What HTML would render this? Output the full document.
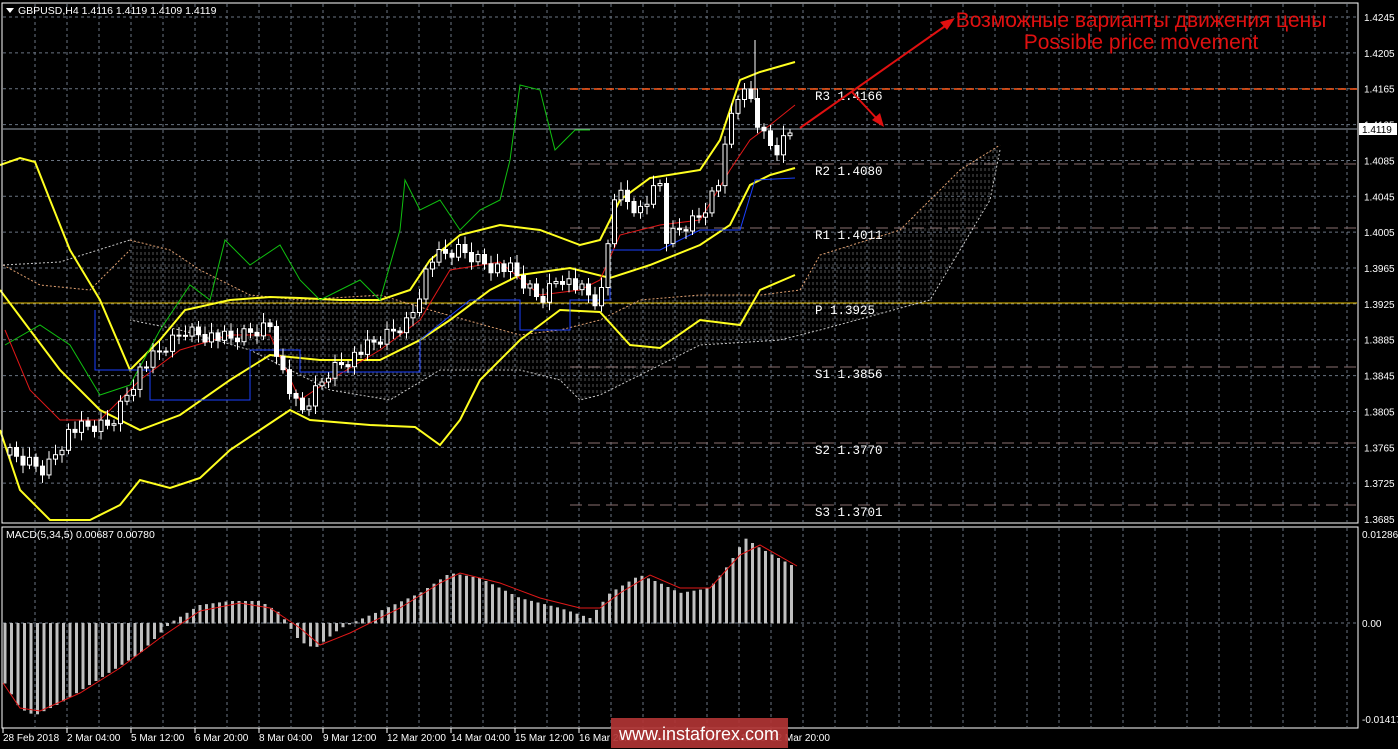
<!DOCTYPE html><html><head><meta charset="utf-8"><style>
html,body{margin:0;padding:0;background:#000;width:1398px;height:749px;overflow:hidden;font-family:"Liberation Sans",sans-serif}
svg{position:absolute;left:0;top:0}
</style></head><body>
<svg id="s" width="1398" height="749" xmlns="http://www.w3.org/2000/svg" font-family="Liberation Sans, sans-serif">
<defs>
<pattern id="hatch" width="4" height="6" patternUnits="userSpaceOnUse"><line x1="1" y1="0" x2="1" y2="3" stroke="#d8d8d8" stroke-width="0.7"/></pattern>
</defs>
<g id="grid"></g>
<g id="cloud"></g>
<g id="lines"></g>
<g id="cand"></g>
<g id="macd"></g>
<rect x="2" y="3" width="1356" height="520" fill="none" stroke="#fff" stroke-width="1"/>
<rect x="2" y="527" width="1356" height="201" fill="none" stroke="#fff" stroke-width="1"/>
<polygon points="6,8 14,8 10,13" fill="#fff"/>
<text x="18" y="14" fill="#fff" font-size="10.5">GBPUSD,H4  1.4116 1.4119 1.4109 1.4119</text>
<text x="6" y="538" fill="#fff" font-size="10.5">MACD(5,34,5) 0.00687 0.00780</text>
<g id="labels" fill="#fff" font-size="10"></g>
<line x1="800" y1="128" x2="948" y2="24" stroke="#e01010" stroke-width="2"/>
<polygon points="955,18 940,22 947,30" fill="#e01010"/>
<line x1="852" y1="92" x2="878" y2="120" stroke="#e01010" stroke-width="2"/>
<polygon points="884,127 872,120 880,113" fill="#e01010"/>
<text x="1141" y="27" fill="#e01010" font-size="21" text-anchor="middle">Возможные варианты движения цены</text>
<text x="1141" y="49" fill="#e01010" font-size="21" text-anchor="middle">Possible price movement</text>
<rect x="611" y="718" width="177" height="30" fill="#b03434" opacity="0.92"/>
<text x="699" y="740" fill="#fff" font-size="18" text-anchor="middle">www.instaforex.com</text>
</svg>
<script>
(function(){
var NS="http://www.w3.org/2000/svg";
function el(p,t,a){var e=document.createElementNS(NS,t);for(var k in a)e.setAttribute(k,a[k]);document.getElementById(p).appendChild(e);return e;}
function interp(pts,x){if(x<=pts[0][0])return pts[0][1];for(var i=0;i<pts.length-1;i++){if(x>=pts[i][0]&&x<=pts[i+1][0]){var t=(x-pts[i][0])/(pts[i+1][0]-pts[i][0]);return pts[i][1]+t*(pts[i+1][1]-pts[i][1]);}}return pts[pts.length-1][1];}
function pl(p,pts,c,w,d){el(p,"polyline",{points:pts.map(function(q){return q.join(",")}).join(" "),fill:"none",stroke:c,"stroke-width":w,"stroke-dasharray":d||"none"});}
for(var x=35;x<1358;x+=32){el("grid","line",{x1:x,y1:4,x2:x,y2:522,stroke:"#6a7482","stroke-dasharray":"3,3"});el("grid","line",{x1:x,y1:528,x2:x,y2:727,stroke:"#6a7482","stroke-dasharray":"3,3"});}
var prices=["1.4245","1.4205","1.4165","1.4125","1.4085","1.4045","1.4005","1.3965","1.3925","1.3885","1.3845","1.3805","1.3765","1.3725","1.3685"];
for(var i=0;i<15;i++){var y=17+i*35.86;if(i<14)el("grid","line",{x1:3,y1:y,x2:1357,y2:y,stroke:"#6a7482","stroke-dasharray":"3,3"});el("labels","text",{x:1364,y:y+4}).textContent=prices[i];}
el("grid","line",{x1:3,y1:623,x2:1357,y2:623,stroke:"#6a7482","stroke-dasharray":"3,3"});
el("labels","text",{x:1362,y:538}).textContent="0.01286";
el("labels","text",{x:1362,y:627}).textContent="0.00";
el("labels","text",{x:1362,y:723}).textContent="-0.01417";
var pv=[[89,"R3 1.4166","#ff5a1a"],[164,"R2 1.4080","#8a7070"],[228,"R1 1.4011","#8a7070"],[303,"P 1.3925","#e8c000"],[367,"S1 1.3856","#8a7070"],[443,"S2 1.3770","#8a7070"],[505,"S3 1.3701","#8a7070"]];
pv.forEach(function(p){if(p[1][0]=="P")el("grid","line",{x1:3,y1:p[0],x2:1357,y2:p[0],stroke:p[2]});else el("grid","line",{x1:570,y1:p[0],x2:1357,y2:p[0],stroke:p[2],"stroke-dasharray":p[0]==89?"8,4":"12,6","stroke-width":p[0]==89?1.5:1});
var t=el("labels","text",{x:815,y:p[0]+11,"font-family":"Liberation Mono, monospace","font-size":"12.5"});t.textContent=p[1];});
el("grid","line",{x1:3,y1:129,x2:1357,y2:129,stroke:"#9aa4b0"});
el("labels","rect",{x:1359,y:123,width:38,height:12,fill:"#fff"});
el("labels","text",{x:1362,y:133,fill:"#000"}).textContent="1.4119";
var tl=["28 Feb 2018","2 Mar 04:00","5 Mar 12:00","6 Mar 20:00","8 Mar 04:00","9 Mar 12:00","12 Mar 20:00","14 Mar 04:00","15 Mar 12:00","16 Mar 20:00","20 Mar 04:00","21 Mar 12:00","22 Mar 20:00"];
for(var i=0;i<tl.length;i++){var xx=3+i*64;el("labels","text",{x:xx,y:741}).textContent=tl[i];el("grid","line",{x1:xx,y1:728,x2:xx,y2:733,stroke:"#fff"});}
var ct=[[130,240],[170,250],[200,270],[250,295],[300,300],[380,295],[430,310],[520,335],[560,330],[600,320],[640,300],[700,295],[760,295],[800,290],[820,255],[900,230],[930,200],[960,170],[1000,145]];
var cb=[[1000,150],[990,200],[930,300],[820,330],[780,340],[700,345],[660,365],[600,395],[580,400],[560,380],[520,370],[440,370],[390,400],[330,390],[250,350],[180,330],[130,320]];
el("cloud","polygon",{points:ct.concat(cb).map(function(q){return q.join(",")}).join(" "),fill:"url(#hatch)",opacity:0.55});
pl("cloud",ct,"#e0a070",1,"2,2");pl("cloud",cb,"#c8c8c8",1,"2,2");
pl("cloud",[[3,265],[40,285],[90,290],[130,250]],"#e0a070",1,"2,2");
pl("cloud",[[3,265],[60,262],[130,240]],"#c8c8c8",1,"2,2");
pl("lines",[[0,165],[20,158],[35,162],[50,200],[70,250],[100,300],[130,370],[160,340],[185,310],[230,300],[270,297],[300,298],[340,300],[380,300],[410,290],[430,260],[460,235],[500,225],[540,230],[580,245],[600,240],[620,200],[650,178],[700,170],[720,140],[740,80],[760,72],[795,62]],"#ffff20",2);
pl("lines",[[0,290],[30,330],[60,370],[100,410],[140,430],[180,415],[230,380],[270,355],[320,360],[380,360],[420,340],[450,320],[490,290],[520,275],[570,268],[610,278],[650,265],[700,245],[730,225],[750,185],[770,175],[795,168]],"#ffff20",2);
pl("lines",[[0,430],[20,490],[50,520],[90,520],[120,505],[140,480],[170,488],[200,478],[230,450],[260,430],[290,410],[310,420],[370,425],[415,427],[440,445],[460,420],[480,380],[520,340],[560,310],[600,312],[630,345],[660,348],[700,320],[740,325],[760,290],[795,275]],"#ffff20",2);
pl("lines",[[5,345],[40,325],[70,345],[100,395],[130,385],[160,330],[190,285],[210,300],[225,240],[250,265],[280,245],[300,280],[320,300],[340,290],[360,280],[380,300],[400,230],[405,180],[420,210],[440,200],[460,230],[480,210],[500,200],[510,160],[520,85],[540,90],[555,150],[575,130],[590,130]],"#10c010",1);
pl("lines",[[5,330],[30,390],[60,420],[100,420],[140,380],[180,350],[230,335],[270,335],[300,400],[330,380],[380,350],[420,320],[450,270],[500,262],[540,295],[580,290],[600,280],[620,235],[660,225],[700,220],[730,170],[750,140],[770,125],[795,105]],"#e01818",1);
pl("lines",[[95,310],[95,370],[150,370],[150,400],[250,400],[250,350],[300,350],[300,372],[420,372],[420,340],[470,300],[520,300],[520,330],[570,330],[570,300],[610,300],[610,250],[660,250],[700,230],[740,230],[755,180],[795,178]],"#1a40ff",1);
var mid=[[10,455],[45,470],[70,430],[110,425],[140,370],[185,330],[230,340],[270,325],[285,380],[300,415],[330,370],[380,340],[410,320],[430,260],[460,250],[490,265],[510,270],[540,300],[560,275],[580,290],[600,305],[615,190],[640,210],[660,185],[665,240],[700,215],[720,180],[735,95],[750,95],[760,130],[775,150],[790,130]];
var prev=interp(mid,8);
for(var x=10,i=0;x<=792;x+=6.5,i++){var c=interp(mid,x)+((i*37)%11-5)*1.5;var tp=Math.min(prev,c),bt=Math.max(prev,c);if(bt-tp<1)bt=tp+1;
el("cand","line",{x1:x,y1:tp-4-(i%4)*2,x2:x,y2:bt+4+(i%3)*2,stroke:"#fff"});
el("cand","rect",{x:x-2,y:tp,width:4,height:bt-tp,fill:c<prev?"#000":"#fff",stroke:"#fff","stroke-width":1});prev=c;}
el("cand","line",{x1:755,y1:40,x2:755,y2:100,stroke:"#fff"});
var mv=[[5,-60],[20,-85],[35,-92],[60,-80],[100,-55],[140,-30],[170,0],[200,18],[230,22],[260,22],[280,10],[300,-18],[315,-25],[340,-5],[380,12],[420,30],[450,50],[480,45],[520,25],[560,15],[590,5],[610,30],[640,48],[660,40],[680,30],[710,35],[730,60],[745,85],[760,75],[797,55]];
for(var x=5;x<=797;x+=6.5){var v=interp(mv,x);el("macd","rect",{x:x-1.5,y:Math.min(623,623-v),width:3,height:Math.abs(v)+0.5,fill:"#c0c0c0"});}
var sig=[[3,-60],[20,-85],[40,-88],[80,-70],[120,-45],[160,-15],[200,12],[240,20],[270,15],[300,-5],[320,-22],[350,-10],[400,15],[440,40],[460,50],[500,40],[540,25],[580,15],[600,15],[620,30],[650,48],[680,35],[710,35],[740,68],[760,78],[797,57]];
pl("macd",sig.map(function(q){return [q[0],623-q[1]]}),"#e01818",1);
})();
</script>
</body></html>
